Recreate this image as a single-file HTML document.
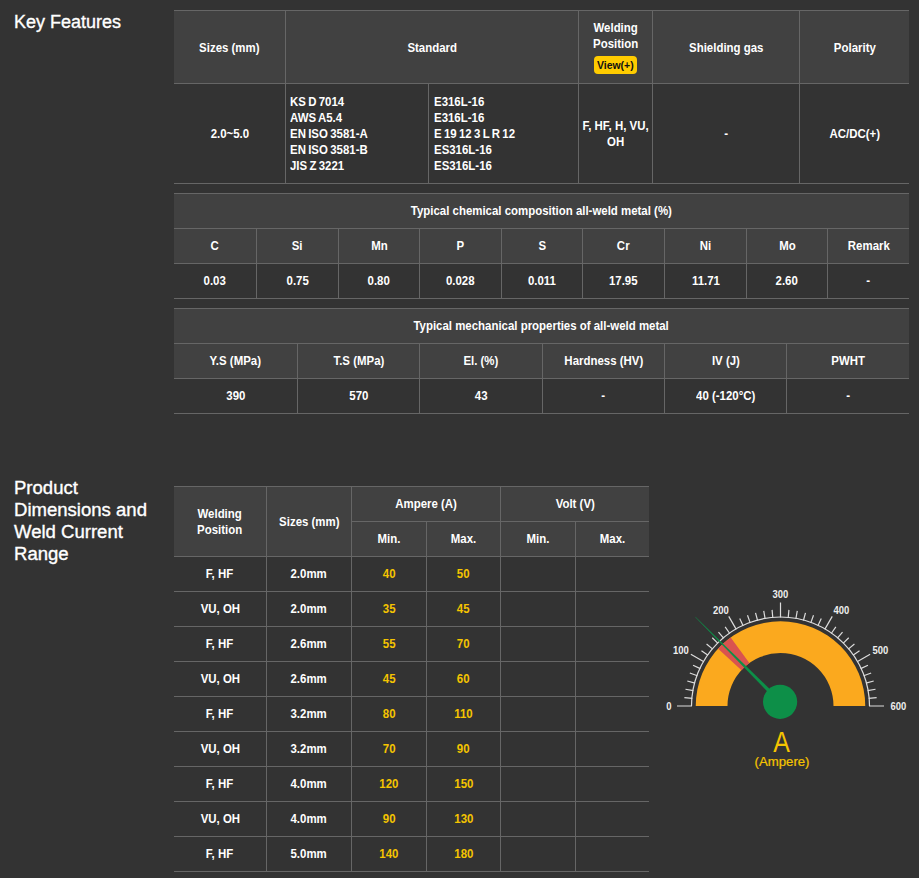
<!DOCTYPE html><html><head><meta charset="utf-8"><style>
*{margin:0;padding:0}
html,body{width:919px;height:878px;overflow:hidden}
body{background:#333333;position:relative;font-family:"Liberation Sans",sans-serif;color:#fff}
div{position:absolute}
p{position:absolute;white-space:nowrap}
.t{display:flex;align-items:center;justify-content:center;text-align:center;font-size:13px;font-weight:bold;line-height:16px}
.t span,.l span{display:inline-block}
.l{font-size:13px;font-weight:bold;line-height:16px;word-spacing:-1px}
.l span{transform-origin:0 0}
p[style*="text-align:center"] span{transform-origin:50% 0}
.hd{font-size:18px;line-height:22px;color:#fff;-webkit-text-stroke:0.35px #fff}.hd span{display:inline-block;transform-origin:0 0}
.g{text-align:center}
</style></head><body><p class="hd" style="left:14px;top:11px"><span>Key Features</span></p>
<p class="hd" style="left:14px;top:477px"><span style="transform:scaleX(1.03)">Product<br>Dimensions and<br>Weld Current<br>Range</span></p>
<div style="left:174px;top:11px;width:735px;height:72px;background:#414141;"></div>
<div style="left:174px;top:10px;width:735px;height:1px;background:#666666;"></div>
<div style="left:174px;top:83px;width:735px;height:1px;background:#666666;"></div>
<div style="left:174px;top:183px;width:735px;height:1px;background:#666666;"></div>
<div style="left:285px;top:11px;width:1px;height:172px;background:#666666;"></div>
<div style="left:578px;top:11px;width:1px;height:172px;background:#666666;"></div>
<div style="left:652px;top:11px;width:1px;height:172px;background:#666666;"></div>
<div style="left:799px;top:11px;width:1px;height:172px;background:#666666;"></div>
<div style="left:428px;top:84px;width:1px;height:99px;background:#666666;"></div>
<p class="t" style="left:174px;top:12px;width:111px;height:72px;"><span style="transform:scaleX(0.88)">Sizes (mm)</span></p>
<p class="t" style="left:286px;top:12px;width:292px;height:72px;"><span style="transform:scaleX(0.88)">Standard</span></p>
<p class="l" style="left:579px;width:73px;top:20px;text-align:center"><span style="transform:scaleX(0.88)">Welding<br>Position</span></p>
<div style="left:594px;top:56px;width:43px;height:18px;background:#ffcc00;border-radius:4px"></div>
<p class="t" style="left:594px;top:56px;width:43px;height:18px;color:#111;font-size:11px"><span style="transform:scaleX(0.95)">View(+)</span></p>
<p class="t" style="left:653px;top:12px;width:146px;height:72px;"><span style="transform:scaleX(0.88)">Shielding gas</span></p>
<p class="t" style="left:800px;top:12px;width:109px;height:72px;"><span style="transform:scaleX(0.88)">Polarity</span></p>
<p class="t" style="left:174px;top:84px;width:111px;height:99px;"><span style="transform:scaleX(0.88)">2.0~5.0</span></p>
<p class="l" style="left:290px;top:94px;"><span style="transform:scaleX(0.88)">KS D 7014<br>AWS A5.4<br>EN ISO 3581-A<br>EN ISO 3581-B<br>JIS Z 3221</span></p>
<p class="l" style="left:434px;top:94px;"><span style="transform:scaleX(0.88)">E316L-16<br>E316L-16<br>E 19 12 3 L R 12<br>ES316L-16<br>ES316L-16</span></p>
<p class="t" style="left:579px;top:84px;width:73px;height:99px;"><span style="transform:scaleX(0.88)">F, HF, H, VU,<br>OH</span></p>
<p class="t" style="left:653px;top:84px;width:146px;height:99px;"><span style="transform:scaleX(0.88)">-</span></p>
<p class="t" style="left:800px;top:84px;width:109px;height:99px;"><span style="transform:scaleX(0.88)">AC/DC(+)</span></p>
<div style="left:174px;top:194px;width:735px;height:69px;background:#414141;"></div>
<div style="left:174px;top:193px;width:735px;height:1px;background:#666666;"></div>
<div style="left:174px;top:228px;width:735px;height:1px;background:#666666;"></div>
<div style="left:174px;top:263px;width:735px;height:1px;background:#666666;"></div>
<div style="left:174px;top:298px;width:735px;height:1px;background:#666666;"></div>
<p class="t" style="left:174px;top:194px;width:735px;height:34px;"><span style="transform:scaleX(0.88)">Typical chemical composition all-weld metal (%)</span></p>
<div style="left:256px;top:229px;width:1px;height:69px;background:#666666;"></div>
<div style="left:338px;top:229px;width:1px;height:69px;background:#666666;"></div>
<div style="left:419px;top:229px;width:1px;height:69px;background:#666666;"></div>
<div style="left:501px;top:229px;width:1px;height:69px;background:#666666;"></div>
<div style="left:582px;top:229px;width:1px;height:69px;background:#666666;"></div>
<div style="left:664px;top:229px;width:1px;height:69px;background:#666666;"></div>
<div style="left:746px;top:229px;width:1px;height:69px;background:#666666;"></div>
<div style="left:827px;top:229px;width:1px;height:69px;background:#666666;"></div>
<p class="t" style="left:174px;top:229px;width:82px;height:34px;"><span style="transform:scaleX(0.88)">C</span></p>
<p class="t" style="left:174px;top:264px;width:82px;height:34px;"><span style="transform:scaleX(0.88)">0.03</span></p>
<p class="t" style="left:257px;top:229px;width:81px;height:34px;"><span style="transform:scaleX(0.88)">Si</span></p>
<p class="t" style="left:257px;top:264px;width:81px;height:34px;"><span style="transform:scaleX(0.88)">0.75</span></p>
<p class="t" style="left:339px;top:229px;width:80px;height:34px;"><span style="transform:scaleX(0.88)">Mn</span></p>
<p class="t" style="left:339px;top:264px;width:80px;height:34px;"><span style="transform:scaleX(0.88)">0.80</span></p>
<p class="t" style="left:420px;top:229px;width:81px;height:34px;"><span style="transform:scaleX(0.88)">P</span></p>
<p class="t" style="left:420px;top:264px;width:81px;height:34px;"><span style="transform:scaleX(0.88)">0.028</span></p>
<p class="t" style="left:502px;top:229px;width:80px;height:34px;"><span style="transform:scaleX(0.88)">S</span></p>
<p class="t" style="left:502px;top:264px;width:80px;height:34px;"><span style="transform:scaleX(0.88)">0.011</span></p>
<p class="t" style="left:583px;top:229px;width:81px;height:34px;"><span style="transform:scaleX(0.88)">Cr</span></p>
<p class="t" style="left:583px;top:264px;width:81px;height:34px;"><span style="transform:scaleX(0.88)">17.95</span></p>
<p class="t" style="left:665px;top:229px;width:81px;height:34px;"><span style="transform:scaleX(0.88)">Ni</span></p>
<p class="t" style="left:665px;top:264px;width:81px;height:34px;"><span style="transform:scaleX(0.88)">11.71</span></p>
<p class="t" style="left:747px;top:229px;width:80px;height:34px;"><span style="transform:scaleX(0.88)">Mo</span></p>
<p class="t" style="left:747px;top:264px;width:80px;height:34px;"><span style="transform:scaleX(0.88)">2.60</span></p>
<p class="t" style="left:828px;top:229px;width:81px;height:34px;"><span style="transform:scaleX(0.88)">Remark</span></p>
<p class="t" style="left:828px;top:264px;width:81px;height:34px;"><span style="transform:scaleX(0.88)">-</span></p>
<div style="left:174px;top:309px;width:735px;height:69px;background:#414141;"></div>
<div style="left:174px;top:308px;width:735px;height:1px;background:#666666;"></div>
<div style="left:174px;top:343px;width:735px;height:1px;background:#666666;"></div>
<div style="left:174px;top:378px;width:735px;height:1px;background:#666666;"></div>
<div style="left:174px;top:413px;width:735px;height:1px;background:#666666;"></div>
<p class="t" style="left:174px;top:309px;width:735px;height:34px;"><span style="transform:scaleX(0.88)">Typical mechanical properties of all-weld metal</span></p>
<div style="left:297px;top:344px;width:1px;height:69px;background:#666666;"></div>
<div style="left:419px;top:344px;width:1px;height:69px;background:#666666;"></div>
<div style="left:542px;top:344px;width:1px;height:69px;background:#666666;"></div>
<div style="left:664px;top:344px;width:1px;height:69px;background:#666666;"></div>
<div style="left:786px;top:344px;width:1px;height:69px;background:#666666;"></div>
<p class="t" style="left:174px;top:344px;width:123px;height:34px;"><span style="transform:scaleX(0.88)">Y.S (MPa)</span></p>
<p class="t" style="left:174px;top:379px;width:123px;height:34px;"><span style="transform:scaleX(0.88)">390</span></p>
<p class="t" style="left:298px;top:344px;width:121px;height:34px;"><span style="transform:scaleX(0.88)">T.S (MPa)</span></p>
<p class="t" style="left:298px;top:379px;width:121px;height:34px;"><span style="transform:scaleX(0.88)">570</span></p>
<p class="t" style="left:420px;top:344px;width:122px;height:34px;"><span style="transform:scaleX(0.88)">El. (%)</span></p>
<p class="t" style="left:420px;top:379px;width:122px;height:34px;"><span style="transform:scaleX(0.88)">43</span></p>
<p class="t" style="left:543px;top:344px;width:121px;height:34px;"><span style="transform:scaleX(0.88)">Hardness (HV)</span></p>
<p class="t" style="left:543px;top:379px;width:121px;height:34px;"><span style="transform:scaleX(0.88)">-</span></p>
<p class="t" style="left:665px;top:344px;width:121px;height:34px;"><span style="transform:scaleX(0.88)">IV (J)</span></p>
<p class="t" style="left:665px;top:379px;width:121px;height:34px;"><span style="transform:scaleX(0.88)">40 (-120&deg;C)</span></p>
<p class="t" style="left:787px;top:344px;width:122px;height:34px;"><span style="transform:scaleX(0.88)">PWHT</span></p>
<p class="t" style="left:787px;top:379px;width:122px;height:34px;"><span style="transform:scaleX(0.88)">-</span></p>
<div style="left:174px;top:487px;width:475px;height:69px;background:#414141;"></div>
<div style="left:174px;top:486px;width:475px;height:1px;background:#666666;"></div>
<div style="left:352px;top:521px;width:297px;height:1px;background:#666666;"></div>
<div style="left:174px;top:556px;width:475px;height:1px;background:#666666;"></div>
<div style="left:174px;top:591px;width:475px;height:1px;background:#666666;"></div>
<div style="left:174px;top:626px;width:475px;height:1px;background:#666666;"></div>
<div style="left:174px;top:661px;width:475px;height:1px;background:#666666;"></div>
<div style="left:174px;top:696px;width:475px;height:1px;background:#666666;"></div>
<div style="left:174px;top:731px;width:475px;height:1px;background:#666666;"></div>
<div style="left:174px;top:766px;width:475px;height:1px;background:#666666;"></div>
<div style="left:174px;top:801px;width:475px;height:1px;background:#666666;"></div>
<div style="left:174px;top:836px;width:475px;height:1px;background:#666666;"></div>
<div style="left:174px;top:871px;width:475px;height:1px;background:#666666;"></div>
<div style="left:266px;top:487px;width:1px;height:384px;background:#666666;"></div>
<div style="left:351px;top:487px;width:1px;height:384px;background:#666666;"></div>
<div style="left:500px;top:487px;width:1px;height:384px;background:#666666;"></div>
<div style="left:426px;top:522px;width:1px;height:349px;background:#666666;"></div>
<div style="left:575px;top:522px;width:1px;height:349px;background:#666666;"></div>
<p class="t" style="left:174px;top:487px;width:92px;height:69px;"><span style="transform:scaleX(0.88)">Welding<br>Position</span></p>
<p class="t" style="left:267px;top:487px;width:84px;height:69px;"><span style="transform:scaleX(0.88)">Sizes (mm)</span></p>
<p class="t" style="left:352px;top:487px;width:148px;height:34px;"><span style="transform:scaleX(0.88)">Ampere (A)</span></p>
<p class="t" style="left:501px;top:487px;width:148px;height:34px;"><span style="transform:scaleX(0.88)">Volt (V)</span></p>
<p class="t" style="left:352px;top:522px;width:74px;height:34px;"><span style="transform:scaleX(0.88)">Min.</span></p>
<p class="t" style="left:427px;top:522px;width:73px;height:34px;"><span style="transform:scaleX(0.88)">Max.</span></p>
<p class="t" style="left:501px;top:522px;width:74px;height:34px;"><span style="transform:scaleX(0.88)">Min.</span></p>
<p class="t" style="left:576px;top:522px;width:73px;height:34px;"><span style="transform:scaleX(0.88)">Max.</span></p>
<p class="t" style="left:174px;top:557px;width:92px;height:34px;"><span style="transform:scaleX(0.88)">F, HF</span></p>
<p class="t" style="left:267px;top:557px;width:84px;height:34px;"><span style="transform:scaleX(0.88)">2.0mm</span></p>
<p class="t" style="left:352px;top:557px;width:74px;height:34px;color:#f5c400"><span style="transform:scaleX(0.88)">40</span></p>
<p class="t" style="left:427px;top:557px;width:73px;height:34px;color:#f5c400"><span style="transform:scaleX(0.88)">50</span></p>
<p class="t" style="left:174px;top:592px;width:92px;height:34px;"><span style="transform:scaleX(0.88)">VU, OH</span></p>
<p class="t" style="left:267px;top:592px;width:84px;height:34px;"><span style="transform:scaleX(0.88)">2.0mm</span></p>
<p class="t" style="left:352px;top:592px;width:74px;height:34px;color:#f5c400"><span style="transform:scaleX(0.88)">35</span></p>
<p class="t" style="left:427px;top:592px;width:73px;height:34px;color:#f5c400"><span style="transform:scaleX(0.88)">45</span></p>
<p class="t" style="left:174px;top:627px;width:92px;height:34px;"><span style="transform:scaleX(0.88)">F, HF</span></p>
<p class="t" style="left:267px;top:627px;width:84px;height:34px;"><span style="transform:scaleX(0.88)">2.6mm</span></p>
<p class="t" style="left:352px;top:627px;width:74px;height:34px;color:#f5c400"><span style="transform:scaleX(0.88)">55</span></p>
<p class="t" style="left:427px;top:627px;width:73px;height:34px;color:#f5c400"><span style="transform:scaleX(0.88)">70</span></p>
<p class="t" style="left:174px;top:662px;width:92px;height:34px;"><span style="transform:scaleX(0.88)">VU, OH</span></p>
<p class="t" style="left:267px;top:662px;width:84px;height:34px;"><span style="transform:scaleX(0.88)">2.6mm</span></p>
<p class="t" style="left:352px;top:662px;width:74px;height:34px;color:#f5c400"><span style="transform:scaleX(0.88)">45</span></p>
<p class="t" style="left:427px;top:662px;width:73px;height:34px;color:#f5c400"><span style="transform:scaleX(0.88)">60</span></p>
<p class="t" style="left:174px;top:697px;width:92px;height:34px;"><span style="transform:scaleX(0.88)">F, HF</span></p>
<p class="t" style="left:267px;top:697px;width:84px;height:34px;"><span style="transform:scaleX(0.88)">3.2mm</span></p>
<p class="t" style="left:352px;top:697px;width:74px;height:34px;color:#f5c400"><span style="transform:scaleX(0.88)">80</span></p>
<p class="t" style="left:427px;top:697px;width:73px;height:34px;color:#f5c400"><span style="transform:scaleX(0.88)">110</span></p>
<p class="t" style="left:174px;top:732px;width:92px;height:34px;"><span style="transform:scaleX(0.88)">VU, OH</span></p>
<p class="t" style="left:267px;top:732px;width:84px;height:34px;"><span style="transform:scaleX(0.88)">3.2mm</span></p>
<p class="t" style="left:352px;top:732px;width:74px;height:34px;color:#f5c400"><span style="transform:scaleX(0.88)">70</span></p>
<p class="t" style="left:427px;top:732px;width:73px;height:34px;color:#f5c400"><span style="transform:scaleX(0.88)">90</span></p>
<p class="t" style="left:174px;top:767px;width:92px;height:34px;"><span style="transform:scaleX(0.88)">F, HF</span></p>
<p class="t" style="left:267px;top:767px;width:84px;height:34px;"><span style="transform:scaleX(0.88)">4.0mm</span></p>
<p class="t" style="left:352px;top:767px;width:74px;height:34px;color:#f5c400"><span style="transform:scaleX(0.88)">120</span></p>
<p class="t" style="left:427px;top:767px;width:73px;height:34px;color:#f5c400"><span style="transform:scaleX(0.88)">150</span></p>
<p class="t" style="left:174px;top:802px;width:92px;height:34px;"><span style="transform:scaleX(0.88)">VU, OH</span></p>
<p class="t" style="left:267px;top:802px;width:84px;height:34px;"><span style="transform:scaleX(0.88)">4.0mm</span></p>
<p class="t" style="left:352px;top:802px;width:74px;height:34px;color:#f5c400"><span style="transform:scaleX(0.88)">90</span></p>
<p class="t" style="left:427px;top:802px;width:73px;height:34px;color:#f5c400"><span style="transform:scaleX(0.88)">130</span></p>
<p class="t" style="left:174px;top:837px;width:92px;height:34px;"><span style="transform:scaleX(0.88)">F, HF</span></p>
<p class="t" style="left:267px;top:837px;width:84px;height:34px;"><span style="transform:scaleX(0.88)">5.0mm</span></p>
<p class="t" style="left:352px;top:837px;width:74px;height:34px;color:#f5c400"><span style="transform:scaleX(0.88)">140</span></p>
<p class="t" style="left:427px;top:837px;width:73px;height:34px;color:#f5c400"><span style="transform:scaleX(0.88)">180</span></p>
<svg style="position:absolute;left:650px;top:570px" width="269" height="220" viewBox="650 570 269 220"><path d="M695.75,706.00 A84.75,84.75 0 0 1 865.25,706.00 L833.50,706.00 A53,53 0 0 0 727.50,706.00 Z" fill="#fba91e"/><path d="M718.12,648.63 A84.75,84.75 0 0 1 730.69,637.44 L749.35,663.12 A53,53 0 0 0 741.49,670.13 Z" fill="#d9534f"/><path d="M691.50,706.00 A89,89 0 0 1 869.50,706.00" fill="none" stroke="#dcdcdc" stroke-width="1.2"/><path d="M692.00,706.00L677.00,706.00M692.34,698.29L684.37,697.59M693.34,690.63L685.47,689.24M695.02,683.09L687.29,681.02M697.34,675.73L689.82,673.00M700.29,668.60L693.04,665.22M703.86,661.75L690.87,654.25M708.01,655.24L701.45,650.65M712.71,649.11L706.58,643.97M717.92,643.42L712.26,637.76M723.61,638.21L718.47,632.08M729.74,633.51L725.15,626.95M736.25,629.36L728.75,616.37M743.10,625.79L739.72,618.54M750.23,622.84L747.50,615.32M757.59,620.52L755.52,612.79M765.13,618.84L763.74,610.97M772.79,617.84L772.09,609.87M780.50,617.50L780.50,602.50M788.21,617.84L788.91,609.87M795.87,618.84L797.26,610.97M803.41,620.52L805.48,612.79M810.77,622.84L813.50,615.32M817.90,625.79L821.28,618.54M824.75,629.36L832.25,616.37M831.26,633.51L835.85,626.95M837.39,638.21L842.53,632.08M843.08,643.42L848.74,637.76M848.29,649.11L854.42,643.97M852.99,655.24L859.55,650.65M857.14,661.75L870.13,654.25M860.71,668.60L867.96,665.22M863.66,675.73L871.18,673.00M865.98,683.09L873.71,681.02M867.66,690.63L875.53,689.24M868.66,698.29L876.63,697.59M869.00,706.00L884.00,706.00" stroke="#dcdcdc" stroke-width="1.2" fill="none"/><text x="668.90" y="709.90" text-anchor="middle" font-size="10.5" font-weight="bold" fill="#eeeeee" font-family="Liberation Sans" transform="translate(668.90,0) scale(0.9,1) translate(-668.90,0)">0</text><text x="680.90" y="654.20" text-anchor="middle" font-size="10.5" font-weight="bold" fill="#eeeeee" font-family="Liberation Sans" transform="translate(680.90,0) scale(0.9,1) translate(-680.90,0)">100</text><text x="721.00" y="614.10" text-anchor="middle" font-size="10.5" font-weight="bold" fill="#eeeeee" font-family="Liberation Sans" transform="translate(721.00,0) scale(0.9,1) translate(-721.00,0)">200</text><text x="780.40" y="598.00" text-anchor="middle" font-size="10.5" font-weight="bold" fill="#eeeeee" font-family="Liberation Sans" transform="translate(780.40,0) scale(0.9,1) translate(-780.40,0)">300</text><text x="841.30" y="614.10" text-anchor="middle" font-size="10.5" font-weight="bold" fill="#eeeeee" font-family="Liberation Sans" transform="translate(841.30,0) scale(0.9,1) translate(-841.30,0)">400</text><text x="880.40" y="654.30" text-anchor="middle" font-size="10.5" font-weight="bold" fill="#eeeeee" font-family="Liberation Sans" transform="translate(880.40,0) scale(0.9,1) translate(-880.40,0)">500</text><text x="898.30" y="709.90" text-anchor="middle" font-size="10.5" font-weight="bold" fill="#eeeeee" font-family="Liberation Sans" transform="translate(898.30,0) scale(0.9,1) translate(-898.30,0)">600</text><path d="M778.69,703.21 L695.11,617.09 L695.39,616.81 L781.51,700.39 Z" fill="#0d8f48"/><circle cx="780.1" cy="701.8" r="17.1" fill="#0d8f48"/></svg>
<p class="g" style="left:701px;top:725px;width:161px;font-size:29px;line-height:34px;color:#f5c400"><span style="display:inline-block;transform:scaleX(0.86)">A</span></p>
<p class="g" style="left:701.5px;top:753px;width:161px;font-size:12px;line-height:18px;color:#f5c400"><span style="display:inline-block;transform:scaleX(1.1);-webkit-text-stroke:0.2px #f5c400">(Ampere)</span></p></body></html>
